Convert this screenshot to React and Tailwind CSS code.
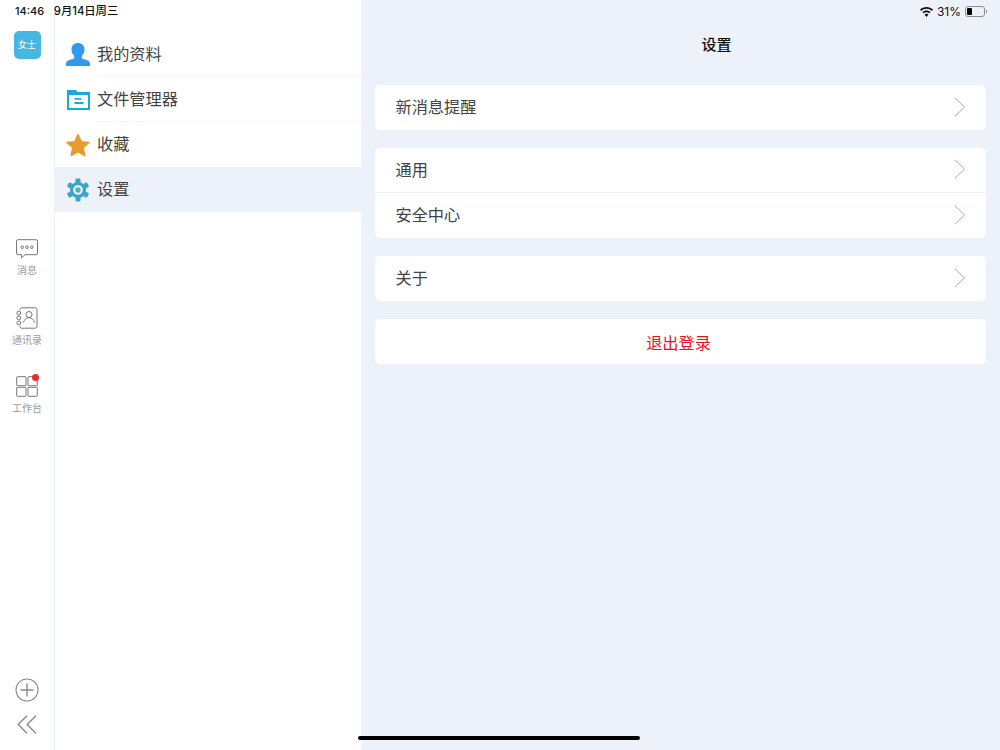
import { useState } from 'react';

const font = { cjk: "font-['Inter','Noto_Sans_CJK_SC',sans-serif]" };

// --- Icons ---
const ChatIcon = () => (
  <svg width="22" height="20" viewBox="0 0 22 20" fill="none" stroke="#777" strokeWidth="1">
    <path d="M2 .7h18a1.500 1.500 0 0 1 1.500 1.500v12a1.500 1.500 0 0 1-1.500 1.500H9l-3.600 3.300.3-3.300H2A1.500 1.500 0 0 1 .5 14.200V2.200A1.500 1.500 0 0 1 2 .7z" />
    <circle cx="6.200" cy="8.200" r="1.300" />
    <circle cx="11" cy="8.200" r="1.300" />
    <circle cx="15.800" cy="8.200" r="1.300" />
  </svg>
);

const ContactsIcon = () => (
  <svg width="22" height="22" viewBox="0 0 22 22" fill="none" stroke="#777" strokeWidth="1">
    <path d="M4 3V2.500A1.700 1.700 0 0 1 5.700 .8h13.600A1.700 1.700 0 0 1 21 2.500v17a1.700 1.700 0 0 1-1.700 1.700H5.700A1.700 1.700 0 0 1 4 19.500V19" />
    <circle cx="2.800" cy="6" r="1.900" />
    <circle cx="2.800" cy="11" r="1.900" />
    <circle cx="2.800" cy="16" r="1.900" />
    <circle cx="13" cy="7.500" r="3" />
    <path d="M7.500 15.500c.7-3 2.800-4.800 5.500-4.800s4.800 1.800 5.500 4.800" />
  </svg>
);

const GridIcon = () => (
  <svg width="22" height="21" viewBox="0 0 22 21" fill="none" stroke="#777" strokeWidth="1">
    <rect x=".7" y=".7" width="9.300" height="9" rx=".6" />
    <rect x="12" y=".7" width="9.300" height="9" rx=".6" />
    <rect x=".7" y="11.300" width="9.300" height="9" rx=".6" />
    <rect x="12" y="11.300" width="9.300" height="9" rx=".6" />
  </svg>
);

const PlusCircle = () => (
  <svg width="24" height="24" viewBox="0 0 24 24" fill="none" stroke="#8a8a8a" strokeWidth="1.100">
    <circle cx="12" cy="12" r="11" />
    <path d="M12 5.500v13M5.500 12h13" strokeWidth="1.400" />
  </svg>
);

const DoubleLeft = () => (
  <svg width="20" height="19" viewBox="0 0 20 19" fill="none" stroke="#8a8a8a" strokeWidth="1.400">
    <path d="M10 .7 1.200 9.500 10 18.300M19 .7l-8.800 8.800 8.800 8.800" />
  </svg>
);

const UserIcon = () => (
  <svg width="24" height="23" viewBox="0 0 24 23" fill="#2f9bea">
    <path d="M12 0c3.900 0 6.500 2.500 6.500 6.300 0 2.600-1 5-2.700 6.400v2c0 .8 1.200 1.300 3.200 1.900 2.800.9 5 1.700 5 4.400V23H0v-2c0-2.700 2.200-3.500 5-4.400 2-.6 3.200-1.100 3.200-1.900v-2C6.500 11.300 5.500 8.900 5.500 6.300 5.500 2.500 8.100 0 12 0z" />
  </svg>
);

const FolderIcon = () => (
  <svg width="23" height="20" viewBox="0 0 23 20" fill="none">
    <path d="M0 0h9l2 2.500h12V5H0z" fill="#1aa9de" />
    <rect x="1" y="3" width="21" height="16" stroke="#1aa9de" strokeWidth="2" />
    <path d="M7.500 8.800h6.500M7.500 13h9" stroke="#1aa9de" strokeWidth="1.800" />
  </svg>
);

const StarIcon = () => (
  <svg width="24" height="24" viewBox="0 0 24 24" fill="#e99a2c" stroke="#e99a2c" strokeWidth="1.500" strokeLinejoin="round">
    <path d="M12 1.500l3.200 7.200 7.800.8-5.900 5.200 1.700 7.800L12 18.500l-6.800 4 1.700-7.800L1 9.500l7.800-.8z" />
  </svg>
);

const GearIcon = () => (
  <svg width="24" height="24" viewBox="0 0 24 24" fill="none">
    <g fill="#3fa3c9">
      <rect x="9.500" y=".5" width="5" height="23" rx="1" />
      <rect x="9.500" y=".5" width="5" height="23" rx="1" transform="rotate(60 12 12)" />
      <rect x="9.500" y=".5" width="5" height="23" rx="1" transform="rotate(120 12 12)" />
    </g>
    <circle cx="12" cy="12" r="8" fill="#3fa3c9" />
    <circle cx="12" cy="12" r="4.800" fill="#f4f7fc" />
    <circle cx="12" cy="12" r="2.700" fill="#4fb0d2" />
  </svg>
);

const Chevron = () => (
  <svg width="12" height="20" viewBox="0 0 12 20" fill="none" stroke="#a8a8a8" strokeWidth="1" className="mr-[-1px] mt-[-2px]">
    <path d="M1 .8 10.500 10 1 19.200" />
  </svg>
);

const WifiIcon = () => (
  <svg width="13" height="10" viewBox="0 0 13 10" fill="#111">
    <path d="M6.500 0C9 0 11.200 1 13 2.600l-1.200 1.300C10.400 2.600 8.500 1.800 6.500 1.800s-3.900.8-5.300 2.100L0 2.600C1.800 1 4 0 6.500 0z" />
    <path d="M6.500 3.400c1.600 0 3 .6 4.100 1.600L9.400 6.300c-.8-.7-1.800-1.100-2.900-1.100s-2.100.4-2.900 1.100L2.400 5c1.100-1 2.500-1.600 4.100-1.600z" />
    <path d="M6.500 6.800c.8 0 1.500.3 2 .8L6.500 10l-2-2.400c.5-.5 1.200-.8 2-.8z" />
  </svg>
);

const BatteryIcon = () => (
  <div className="flex items-center gap-[1px]">
    <div className="w-[20px] h-[11px] rounded-[3px] border border-[#8d8d8d] p-[1px]">
      <div className="w-[5px] h-full rounded-[1px] bg-black" />
    </div>
    <div className="w-[1px] h-[3px] bg-[#8d8d8d]" />
  </div>
);

// --- Left rail ---
function RailItem({ icon, label, badge }) {
  return (
    <div className="relative flex flex-col items-center">
      {icon}
      {badge && <span className="absolute top-[-2px] right-[3px] w-[7px] h-[7px] rounded-full bg-[#ee2a2a]" />}
      <span className="mt-[4px] text-[10px] leading-[14px] text-[#9a9a9a]">{label}</span>
    </div>
  );
}

function Rail() {
  return (
    <aside className="w-[55px] shrink-0 h-full flex flex-col items-center bg-white border-r border-[#edf1fa]">
      <div className="mt-[31px] w-[27px] h-[28px] rounded-[5px] bg-[#46b7e3] flex items-center justify-center text-[9px] text-white">女士</div>
      <div className="mt-[180px] flex flex-col items-center">
        <div className="h-[38px]"><RailItem icon={<ChatIcon />} label="消息" /></div>
        <div className="mt-[30px]"><RailItem icon={<ContactsIcon />} label="通讯录" /></div>
        <div className="mt-[29px]"><RailItem icon={<GridIcon />} label="工作台" badge /></div>
      </div>
      <div className="mt-auto mb-[16px] flex flex-col items-center gap-[13px]">
        <PlusCircle />
        <DoubleLeft />
      </div>
    </aside>
  );
}

// --- Middle menu ---
const menuItems = [
  { label: '我的资料', icon: <UserIcon /> },
  { label: '文件管理器', icon: <FolderIcon /> },
  { label: '收藏', icon: <StarIcon /> },
  { label: '设置', icon: <GearIcon />, active: true },
];

function Menu() {
  return (
    <nav className="w-[306px] shrink-0 h-full pt-[32px] bg-white">
      {menuItems.map((item, i) => (
        <div key={item.label} className={`h-[45px] flex items-center ${item.active ? 'bg-[#edf1fa]' : ''}`}>
          <div className="w-[42px] flex justify-center pl-[4px] shrink-0">{item.icon}</div>
          <div className={`flex-1 h-full flex items-center text-[16.2px] text-[#444] ${i < 2 ? 'border-b border-[#f5f6f8]' : ''}`}>{item.label}</div>
        </div>
      ))}
    </nav>
  );
}

// --- Settings panel ---
function Row({ label, divider }) {
  return (
    <div className={`h-[45px] pl-[20.5px] pr-[21px] flex items-center justify-between text-[16.2px] text-[#444] ${divider ? 'border-b border-[#edf1f6]' : ''}`}>
      <span>{label}</span>
      <Chevron />
    </div>
  );
}

function Settings() {
  return (
    <main className="flex-1 h-full bg-[#edf1fa] pl-[14px] pr-[14px]">
      <h1 className="pt-[35px] h-[85px] pl-[72px] text-center text-[15px] leading-[20px] font-medium text-[#111]">设置</h1>
      <div className="flex flex-col gap-[18px]">
        <div className="bg-white rounded-[5px]"><Row label="新消息提醒" /></div>
        <div className="bg-white rounded-[5px]">
          <Row label="通用" divider />
          <Row label="安全中心" />
        </div>
        <div className="bg-white rounded-[5px]"><Row label="关于" /></div>
        <button className="h-[45px] pt-[4px] pr-[4px] rounded-[5px] bg-white text-[16.2px] text-[#e8141c]">退出登录</button>
      </div>
    </main>
  );
}

export default function App() {
  const [view] = useState('settings');

  return (
    <div className={`relative w-[1000px] h-[750px] overflow-hidden flex ${font.cjk}`} data-view={view}>
      <Rail />
      <Menu />
      <Settings />

      {/* status bar */}
      <div className="absolute top-[4px] left-[15px] flex items-center h-[15px] text-[#111]">
        <span className="text-[11px] font-medium">14:46</span>
        <span className="ml-[9.500px] text-[11.300px] font-medium">9月14日周三</span>
      </div>
      <div className="absolute top-[4px] right-[13px] flex items-center h-[15px] gap-[4px] text-[#111]">
        <WifiIcon />
        <span className="text-[12px]">31%</span>
        <BatteryIcon />
      </div>

      {/* home indicator */}
      <div className="absolute bottom-[10px] left-[358px] w-[282px] h-[4px] rounded-full bg-black" />
    </div>
  );
}
